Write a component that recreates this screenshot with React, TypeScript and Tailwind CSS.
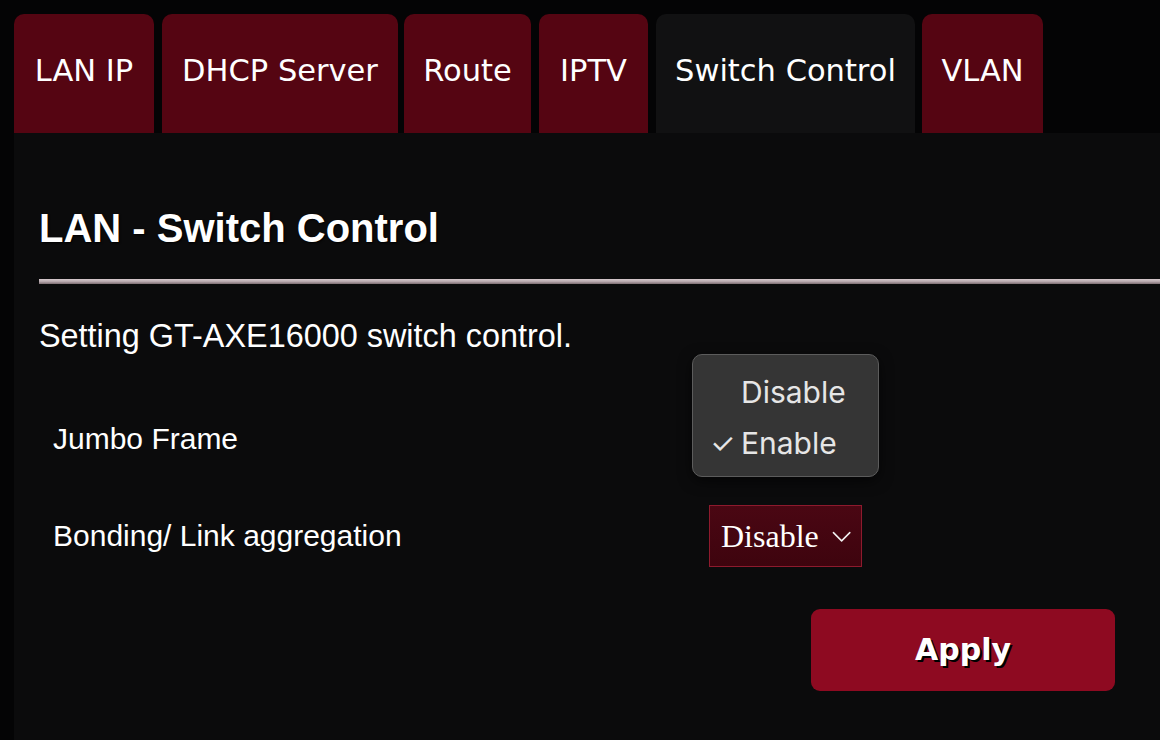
import React from "react";

const tabs = [
  { label: "LAN IP", w: "w-[140px]", active: false, ml: "ml-0" },
  { label: "DHCP Server", w: "w-[236px]", active: false, ml: "ml-[8px]" },
  { label: "Route", w: "w-[127px]", active: false, ml: "ml-[6px]" },
  { label: "IPTV", w: "w-[109px]", active: false, ml: "ml-[8px]" },
  { label: "Switch Control", w: "w-[259px]", active: true, ml: "ml-[8px]" },
  { label: "VLAN", w: "w-[121px]", active: false, ml: "ml-[7px]" },
];

export default function App() {
  return (
    <div className="relative w-[1160px] h-[740px] overflow-hidden bg-[#040405] text-white">
      {/* Tabs */}
      <div className="flex pl-[14px] pt-[14px]">
        {tabs.map((t) => (
          <div
            key={t.label}
            className={`${t.w} ${t.ml} h-[119px] rounded-t-[10px] flex justify-center pt-[38px] text-[30.5px] leading-[38px] font-['DejaVu_Sans',sans-serif] ${
              t.active ? "bg-[#111112]" : "bg-[#550512]"
            }`}
          >
            {t.label}
          </div>
        ))}
      </div>

      {/* Panel */}
      <div className="ml-[14px] h-[607px] bg-[#0b0b0c] pl-[25px] flex flex-col font-['Liberation_Sans',Arial,sans-serif]">
        <h1 className="mt-[71px] text-[40px] leading-[48px] font-bold [text-shadow:1px_1px_2px_#000]">
          LAN - Switch Control
        </h1>
        <div className="mt-[27px] h-[5px] bg-gradient-to-b from-[#d6cacd] via-[#b8a9ae] to-[#7d6e73]" />
        <p className="mt-[33px] text-[32.4px] leading-[38px]">
          Setting GT-AXE16000 switch control.
        </p>

        <div className="mt-[35px] flex flex-col pl-[14px]">
          <div className="h-[97px] flex items-center">
            <span className="w-[656px] text-[30px] leading-[36px]">Jumbo Frame</span>
          </div>
          <div className="h-[97px] flex items-center">
            <span className="w-[656px] text-[30px] leading-[36px]">Bonding/ Link aggregation</span>
            <div className="h-[62px] w-[153px] border border-[#8e1a2d] bg-gradient-to-b from-[#4a0713] to-[#3e040e] flex items-center pl-[11px] pr-[10px]">
              <span className="font-['Liberation_Serif','Times_New_Roman',serif] text-[32px] leading-[36px]">
                Disable
              </span>
              <svg className="ml-[13px] mt-[2px]" width="20" height="12" viewBox="0 0 20 12" fill="none">
                <path d="M1.5 1.5 L10 10 L18.5 1.5" stroke="#f2f2f2" strokeWidth="1.6" strokeLinecap="round" strokeLinejoin="round" />
              </svg>
            </div>
          </div>
        </div>

        <div className="mt-[25px] flex justify-end pr-[45px]">
          <button className="w-[304px] h-[82px] rounded-[9px] bg-[#8e0a21] flex items-center justify-center font-['DejaVu_Sans',sans-serif] font-bold text-[30px] leading-[36px] text-white [text-shadow:2px_2px_0_#000]">
            Apply
          </button>
        </div>
      </div>

      {/* Native select popup */}
      <div className="absolute left-[692px] top-[354px] w-[187px] h-[123px] rounded-[10px] border border-[#5c5c5c] bg-[#353535] shadow-[0_4px_14px_rgba(0,0,0,0.6)] font-['Inter',sans-serif] text-[#e6e6e6] flex flex-col pt-[17px]">
        <div className="h-[40px] flex items-center pl-[48px] text-[30px] leading-[36px]">Disable</div>
        <div className="h-[40px] mt-[11px] flex items-center text-[30px] leading-[36px]">
          <span className="w-[48px] flex justify-end pr-[6px] text-[28px]">✓</span>
          Enable
        </div>
      </div>
    </div>
  );
}
